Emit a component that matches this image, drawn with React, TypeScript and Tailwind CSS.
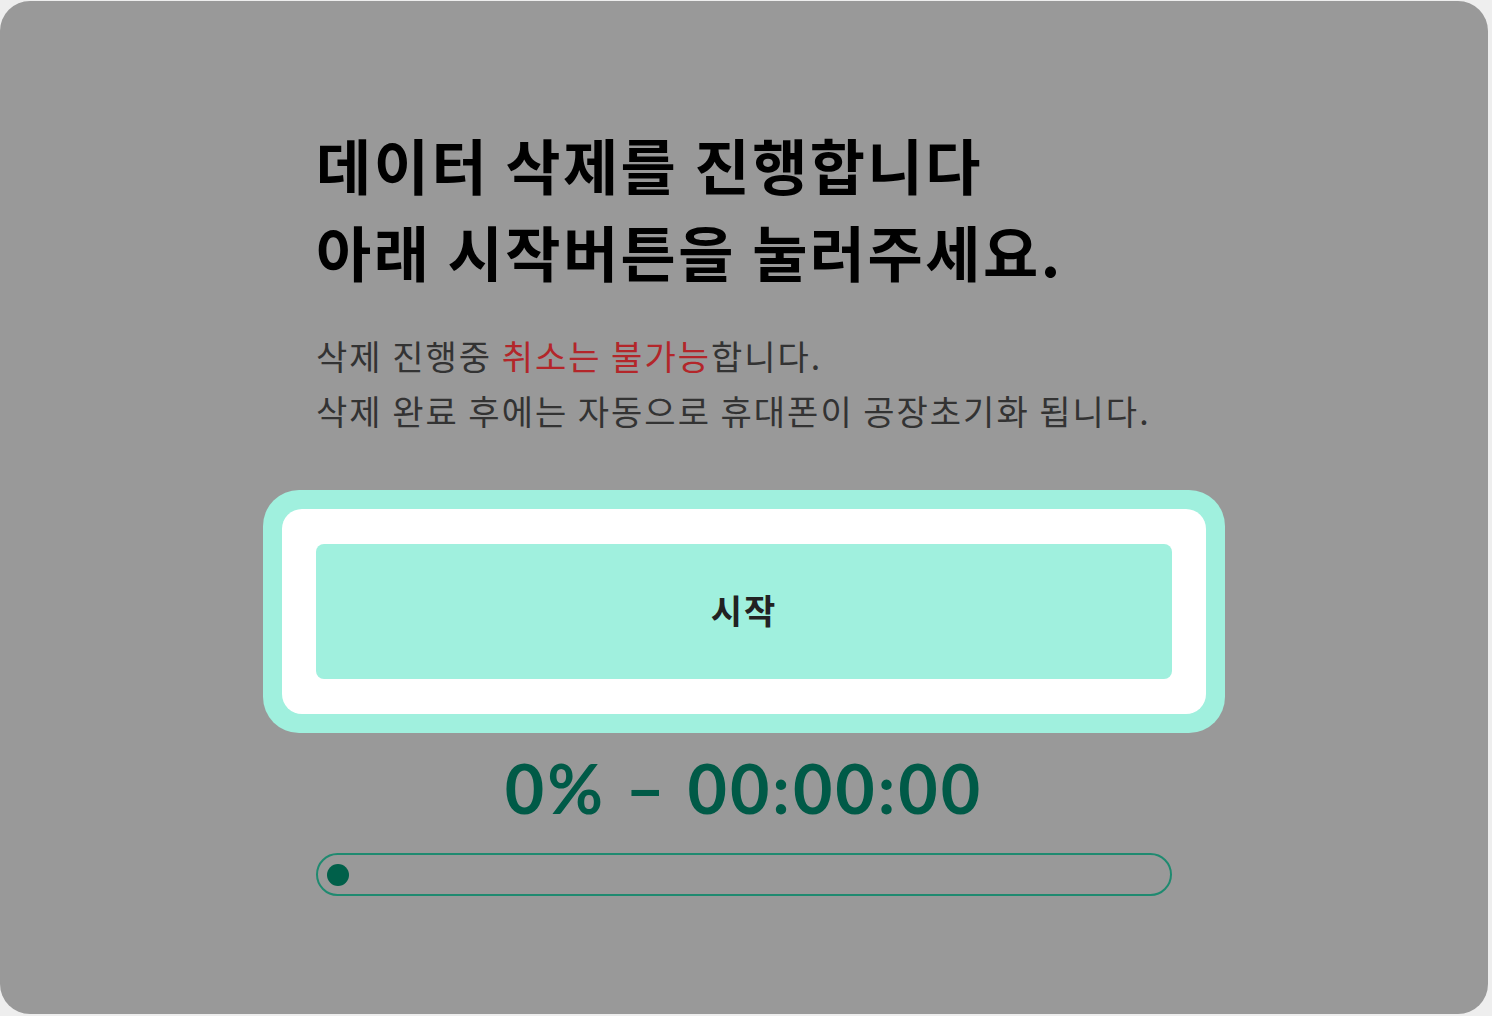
export default function App() {
  const progress = 0

  return (
    <div className="w-[1492px] h-[1016px] bg-[#eeeeee] overflow-hidden">
      <div className="w-[1488px] h-[1013px] mt-[1px] rounded-[30px] bg-[#999999] flex flex-col items-start pl-[316px] pt-[119px]">
        {/* Heading */}
        <h1 className="text-[60px] leading-[87px] font-bold text-black tracking-[2.5px] font-['Noto_Sans_CJK_KR',sans-serif]">
          데이터 삭제를 진행합니다
          <br />
          아래 시작버튼을 눌러주세요.
        </h1>

        <p className="mt-[34px] text-[34px] leading-[55px] tracking-[2px] text-[#333333] font-['Noto_Sans_CJK_KR',sans-serif]">
          삭제 진행중 <span className="text-[#b3262a]">취소는 불가능</span>합니다.
          <br />
          삭제 완료 후에는 자동으로 휴대폰이 공장초기화 됩니다.
        </p>

        {/* Start button */}
        <div className="mt-[52px] -ml-[53px] w-[962px] h-[243px] rounded-[36px] bg-[#a0f0de] p-[19px]">
          <div className="w-full h-full rounded-[20px] bg-white px-[34px] py-[35px]">
            <button className="w-full h-full pb-[5px] rounded-[8px] bg-[#a0f0de] text-[34px] font-bold tracking-[2px] text-[#222222] font-['Noto_Sans_CJK_KR',sans-serif]">
              시작
            </button>
          </div>
        </div>

        {/* Progress */}
        <div className="w-[856px] mt-[15px] flex justify-center">
          <span className="text-[68px] leading-[80px] font-bold tracking-[3px] text-[#005a47] font-['Lato',sans-serif]">
            {progress}% – 00:00:00
          </span>
        </div>

        <div className="mt-[25px] w-[856px] h-[43px] rounded-full border-2 border-[#1f8a70] flex items-center px-[9px]">
          <div className="w-[22px] h-[22px] rounded-full bg-[#00604a]" />
        </div>
      </div>
    </div>
  )
}
